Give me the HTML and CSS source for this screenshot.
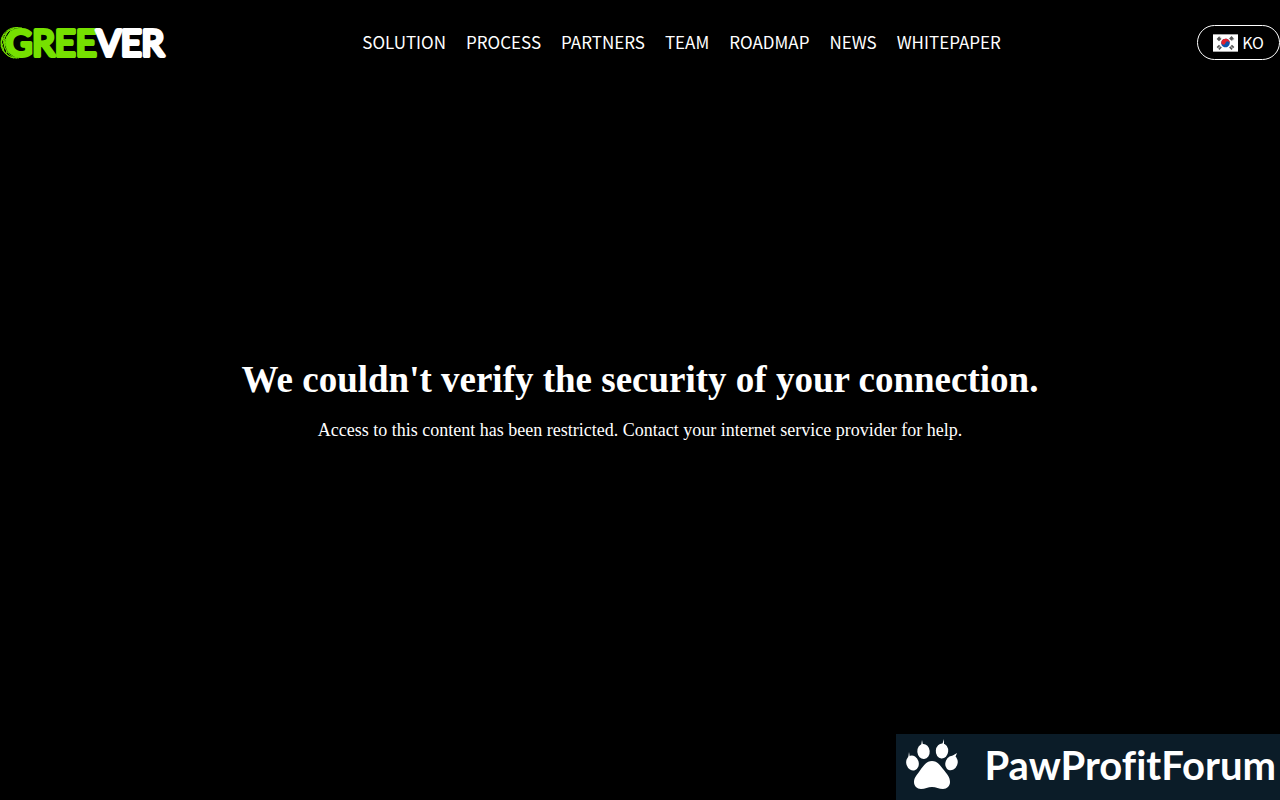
FILE: index.html
```html
<!DOCTYPE html>
<html lang="en">
<head>
    <meta charset="UTF-8">
    <meta name="viewport" content="width=device-width, initial-scale=1.0">
    <title>GREEVER</title>
    <link rel="stylesheet" href="styles.css">
</head>
<body>
    <header>
        <a class="logo" href="#home">
            <svg viewBox="0 0 166 34" role="img" aria-label="GREEVER">
                <path class="swirl" d="M18 1.500C8 1 1 8 1 17s7 15 16 15M22 2C10 0 4 8 4 16s6 16 15 16M14 3C5 5 0 12 2 20s7 11 12 12M1 16l8-12M1 21L12 3M3 25l4-14M6 28l2-8M2 11l7 16M5 8l4 9"/>
                <text class="logo-text" x="6" y="30"><tspan class="green">GREE</tspan><tspan class="white">VER</tspan></text>
            </svg>
        </a>
        <nav>
            <a href="#solution">SOLUTION</a>
            <a href="#process">PROCESS</a>
            <a href="#partners">PARTNERS</a>
            <a href="#team">TEAM</a>
            <a href="#roadmap">ROADMAP</a>
            <a href="#news">NEWS</a>
            <a href="#whitepaper">WHITEPAPER</a>
        </nav>
        <button class="language" type="button">
            <svg class="flag" viewBox="0 0 26 18" aria-hidden="true">
                <path fill="#fff" d="M0 0h26v18H0z"/>
                <g transform="rotate(15 13 9)">
                    <circle cx="13" cy="9" r="4.500" fill="#0d54ac"/>
                    <path fill="#e4232e" d="M8.500 9a4.500 4.500 0 0 1 9 0 2.250 2.250 0 0 0-4.500 0 2.250 2.250 0 0 1-4.500 0z"/>
                </g>
                <g stroke="#555" stroke-width="3.500">
                    <path d="M5 6l3-3M18 3l3 3" stroke-dasharray="3.500 .5"/>
                    <path d="M5 12l3 3M18 15l3-3" stroke-dasharray="1.800 .6"/>
                </g>
            </svg>
            <span>KO</span>
        </button>
    </header>
    <main>
        <h1>We couldn't verify the security of your connection.</h1>
        <p>Access to this content has been restricted. Contact your internet service provider for help.</p>
    </main>
    <a class="forum" href="#forum">
        <svg class="paw" viewBox="0 0 52 52" aria-hidden="true">
            <g fill="#fff">
                <ellipse cx="6.500" cy="24" rx="6.200" ry="7.500" transform="rotate(-18 6.500 24)"/>
                <ellipse cx="17.500" cy="12.500" rx="6.200" ry="7.500" transform="rotate(-5 17.500 12.500)"/>
                <ellipse cx="36" cy="12" rx="6.200" ry="7.500" transform="rotate(5 36 12)"/>
                <ellipse cx="45.500" cy="24" rx="6" ry="7.500" transform="rotate(22 45.500 24)"/>
                <path d="M2 20l1-7 1 6zM15 7l1-6 1 5zM36 6l2-6v6zM46 17l5-3-2 5z"/>
                <path d="M26 22c5 0 8 4 11 8 4 5 7 8 7 13 0 4-3 7-7 7s-7-2-11-2-7 2-11 2-7-3-7-7c0-5 4-8 7-13 3-4 6-8 11-8z"/>
            </g>
        </svg>
        <span>PawProfitForum</span>
    </a>
</body>
</html>
```
FILE: styles.css
```css
* {
    box-sizing: border-box;
}
body {
    margin: 0;
    min-height: 100vh;
    display: flex;
    flex-direction: column;
    background-color: #000;
    color: #fff;
    font-family: "Liberation Serif", serif;
}
a {
    color: inherit;
    text-decoration: none;
}
header {
    display: flex;
    align-items: center;
    justify-content: space-between;
    height: 85px;
    font-family: "Noto Sans CJK KR", sans-serif;
}
.logo svg {
    display: block;
    width: 166px;
    height: 34px;
    overflow: visible;
}
.swirl {
    fill: none;
    stroke: #76e000;
    stroke-width: 1;
}
.logo-text {
    font-family: Lato, sans-serif;
    font-size: 36px;
    font-weight: 400;
    stroke-width: 4;
    stroke-linejoin: round;
}
.green {
    fill: #76e000;
    stroke: #76e000;
}
.white {
    fill: #fff;
    stroke: #fff;
}
nav {
    display: flex;
    gap: 20px;
    padding-bottom: 2px;
    font-size: 17px;
}
.language {
    display: flex;
    align-items: center;
    gap: 4px;
    height: 35px;
    padding: 0 15px;
    border: 1px solid #fff;
    border-radius: 18px;
    background-color: transparent;
    color: #fff;
    font-family: inherit;
    font-size: 16px;
    cursor: pointer;
}
.language span {
    padding-bottom: 2px;
}
.flag {
    width: 25px;
    height: 18px;
}
main {
    flex: 1;
    padding-top: 272px;
    text-align: center;
}
h1 {
    margin: 0 0 16px;
    font-size: 37px;
    line-height: 46px;
}
p {
    margin: 0;
    font-size: 18px;
    line-height: 22px;
}
.forum {
    display: flex;
    align-items: center;
    align-self: flex-end;
    justify-content: space-between;
    width: 30%;
    min-width: 380px;
    height: 66px;
    padding: 0 4px 4px 10px;
    background-color: #0b1c28;
    font-family: Lato, sans-serif;
    font-size: 40px;
    font-weight: 700;
    font-variant-ligatures: none;
    line-height: 48px;
}
.paw {
    width: 52px;
    height: 52px;
}
```
